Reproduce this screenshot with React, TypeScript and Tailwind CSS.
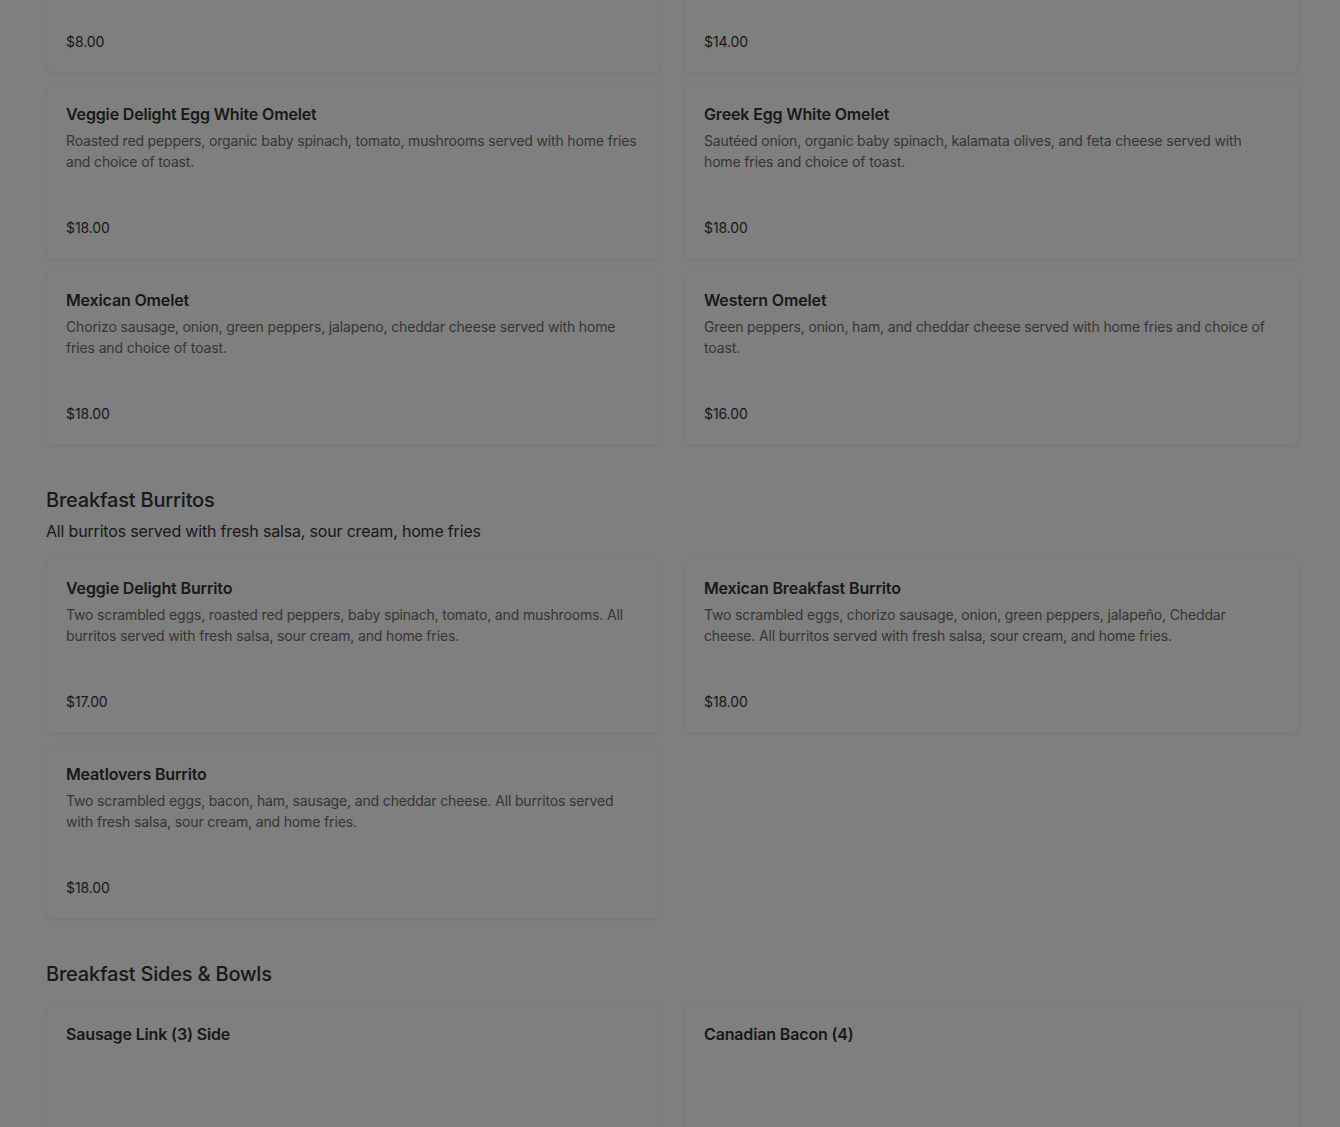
import React from 'react'

type Item = { name?: string; desc?: string; price?: string }

const omelets: Item[] = [
  {
    name: 'Veggie Delight Egg White Omelet',
    desc: 'Roasted red peppers, organic baby spinach, tomato, mushrooms served with home fries and choice of toast.',
    price: '$18.00',
  },
  {
    name: 'Greek Egg White Omelet',
    desc: 'Sautéed onion, organic baby spinach, kalamata olives, and feta cheese served with home fries and choice of toast.',
    price: '$18.00',
  },
  {
    name: 'Mexican Omelet',
    desc: 'Chorizo sausage, onion, green peppers, jalapeno, cheddar cheese served with home fries and choice of toast.',
    price: '$18.00',
  },
  {
    name: 'Western Omelet',
    desc: 'Green peppers, onion, ham, and cheddar cheese served with home fries and choice of toast.',
    price: '$16.00',
  },
]

const burritos: Item[] = [
  {
    name: 'Veggie Delight Burrito',
    desc: 'Two scrambled eggs, roasted red peppers, baby spinach, tomato, and mushrooms. All burritos served with fresh salsa, sour cream, and home fries.',
    price: '$17.00',
  },
  {
    name: 'Mexican Breakfast Burrito',
    desc: 'Two scrambled eggs, chorizo sausage, onion, green peppers, jalapeño, Cheddar cheese. All burritos served with fresh salsa, sour cream, and home fries.',
    price: '$18.00',
  },
  {
    name: 'Meatlovers Burrito',
    desc: 'Two scrambled eggs, bacon, ham, sausage, and cheddar cheese. All burritos served with fresh salsa, sour cream, and home fries.',
    price: '$18.00',
  },
]

const sides: Item[] = [{ name: 'Sausage Link (3) Side' }, { name: 'Canadian Bacon (4)' }]

function Card({ item }: { item: Item }) {
  return (
    <div className="flex h-[172px] flex-col rounded-md bg-white pb-5 pl-[19px] pr-5 pt-4 shadow-[0_1px_6px_rgba(0,0,0,0.09)]">
      <h3 className="text-[16px] font-semibold leading-6 tracking-[-0.15px] text-[#333]">{item.name}</h3>
      {item.desc && (
        <p className="mt-1 text-[14px] leading-[21px] tracking-[-0.15px] text-[#6b6b6b]">{item.desc}</p>
      )}
      {item.price && <div className="mt-auto text-[14px] leading-5 tracking-[-0.1px] text-[#333]">{item.price}</div>}
    </div>
  )
}

// top row is scrolled past: only the bottom of these cards is in view
function CutCard({ price }: { price: string }) {
  return (
    <div className="flex h-[72px] flex-col justify-end rounded-b-md bg-white pb-5 pl-[19px] pr-5 shadow-[0_1px_6px_rgba(0,0,0,0.09)]">
      <div className="text-[14px] leading-5 tracking-[-0.1px] text-[#333]">{price}</div>
    </div>
  )
}

export default function App() {
  return (
    <div className="relative h-[1127px] overflow-hidden bg-white" style={{ fontFamily: 'Inter, "Noto Sans", sans-serif' }}>
      <div className="pl-[46px]">
        <div className="ml-px grid grid-cols-[613px_613px] gap-x-[25px] gap-y-[14px]">
          <CutCard price="$8.00" />
          <CutCard price="$14.00" />
          {omelets.map((it) => (
            <Card key={it.name} item={it} />
          ))}
        </div>

        <section className="mt-[42px]">
          <h2 className="text-[20px] font-medium leading-7 tracking-[-0.2px] text-[#333]">Breakfast Burritos</h2>
          <p className="mt-[5px] text-[16px] leading-6 tracking-[-0.18px] text-[#333]">
            All burritos served with fresh salsa, sour cream, home fries
          </p>
          <div className="ml-px mt-[17px] grid grid-cols-[613px_613px] gap-x-[25px] gap-y-[14px]">
            {burritos.map((it) => (
              <Card key={it.name} item={it} />
            ))}
          </div>
        </section>

        <section className="mt-[42px]">
          <h2 className="text-[20px] font-medium leading-7 tracking-[-0.2px] text-[#333]">Breakfast Sides &amp; Bowls</h2>
          <div className="ml-px mt-[18px] grid grid-cols-[613px_613px] gap-x-[25px] gap-y-[14px]">
            {sides.map((it) => (
              <Card key={it.name} item={it} />
            ))}
          </div>
        </section>
      </div>
      <div className="pointer-events-none absolute inset-0 bg-black/50" />
    </div>
  )
}
